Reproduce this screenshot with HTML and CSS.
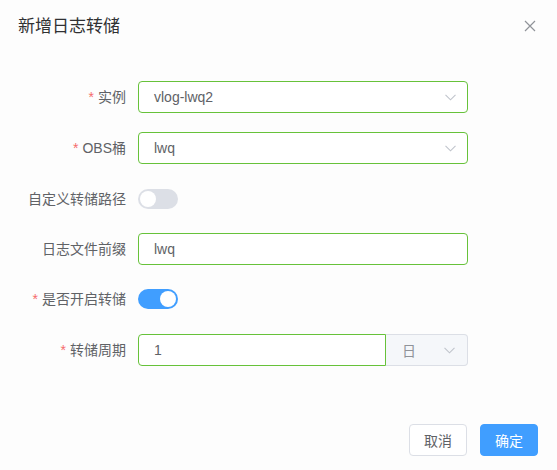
FILE: index.html
```html
<!DOCTYPE html>
<html lang="zh-CN">
<head>
<meta charset="utf-8">
<title>新增日志转储</title>
<link rel="stylesheet" href="styles.css">
</head>
<body>
<div class="dialog">
  <div class="header">
    <span class="title">新增日志转储</span>
    <svg class="close" width="12" height="12" viewBox="0 0 12 12"><path d="M1 1L11 11M11 1L1 11" stroke="#909399" stroke-width="1.2" fill="none"/></svg>
  </div>
  <form class="form">
    <div class="row r51">
      <label class="label"><span class="req">*</span>实例</label>
      <div class="input ok">
        <span class="val">vlog-lwq2</span>
        <svg class="chev" width="11" height="7" viewBox="0 0 11 7"><polyline points="0.5,0.8 5.5,5.8 10.5,0.8" stroke="#c0c4cc" stroke-width="1.1" fill="none"/></svg>
      </div>
    </div>
    <div class="row r51">
      <label class="label"><span class="req">*</span>OBS桶</label>
      <div class="input ok">
        <span class="val">lwq</span>
        <svg class="chev" width="11" height="7" viewBox="0 0 11 7"><polyline points="0.5,0.8 5.5,5.8 10.5,0.8" stroke="#c0c4cc" stroke-width="1.1" fill="none"/></svg>
      </div>
    </div>
    <div class="row r50">
      <label class="label">自定义转储路径</label>
      <div class="ctl"><span class="switch"><span class="knob"></span></span></div>
    </div>
    <div class="row r50">
      <label class="label">日志文件前缀</label>
      <div class="input ok"><span class="val">lwq</span></div>
    </div>
    <div class="row r51">
      <label class="label"><span class="req">*</span>是否开启转储</label>
      <div class="ctl"><span class="switch on"><span class="knob"></span></span></div>
    </div>
    <div class="row">
      <label class="label"><span class="req">*</span>转储周期</label>
      <div class="group">
        <div class="input ok grow"><span class="val">1</span></div>
        <div class="append">
          <span class="unit">日</span>
          <svg class="chev" width="11" height="7" viewBox="0 0 11 7"><polyline points="0.5,0.8 5.5,5.8 10.5,0.8" stroke="#c0c4cc" stroke-width="1.1" fill="none"/></svg>
        </div>
      </div>
    </div>
  </form>
  <div class="footer">
    <button type="button" class="btn">取消</button>
    <button type="button" class="btn primary">确定</button>
  </div>
</div>
</body>
</html>
```
FILE: styles.css
```css
html, body {
  margin: 0;
  padding: 0;
  background: #fdfdfd;
}
body {
  font-family: "Liberation Sans", Arial, "Noto Sans CJK SC", sans-serif;
  color: #606266;
}
.dialog {
  width: 557px;
  height: 470px;
  display: flex;
  flex-direction: column;
}
.header {
  display: flex;
  justify-content: space-between;
  align-items: center;
  padding: 15px 21px 0 18px;
  height: 24px;
}
.title {
  font-size: 17px;
  line-height: 24px;
  color: #303133;
}
.close {
  display: block;
  margin-top: -2px;
}
.form {
  margin: 42px 0 0 0;
  display: flex;
  flex-direction: column;
}
.row {
  display: flex;
  align-items: center;
  height: 32px;
}
.r51 { margin-bottom: 19px; }
.r50 { margin-bottom: 18px; }
.label {
  width: 126px;
  padding-right: 12px;
  text-align: right;
  font-size: 14px;
  line-height: 32px;
  color: #606266;
  white-space: nowrap;
}
.req {
  color: #f56c6c;
  margin-right: 4px;
}
.input {
  box-sizing: border-box;
  width: 330px;
  height: 32px;
  border: 1px solid #dcdfe6;
  border-radius: 4px;
  background: #fff;
  display: flex;
  align-items: center;
  justify-content: space-between;
  padding: 0 11px 0 15px;
  font-size: 14px;
  color: #606266;
}
.input.ok { border-color: #67c23a; }
.chev { display: block; }
.ctl {
  display: flex;
  align-items: center;
  height: 32px;
}
.switch {
  position: relative;
  display: block;
  width: 40px;
  height: 20px;
  border-radius: 10px;
  background: #dcdfe6;
}
.switch .knob {
  position: absolute;
  top: 2px;
  left: 2px;
  width: 16px;
  height: 16px;
  border-radius: 50%;
  background: #fff;
}
.switch.on { background: #409eff; }
.switch.on .knob { left: 22px; }
.group {
  display: flex;
  width: 330px;
  height: 32px;
}
.input.grow {
  width: 248px;
  border-top-right-radius: 0;
  border-bottom-right-radius: 0;
}
.append {
  box-sizing: border-box;
  width: 82px;
  height: 32px;
  background: #f5f7fa;
  border: 1px solid #dcdfe6;
  border-left: none;
  border-radius: 0 4px 4px 0;
  display: flex;
  align-items: center;
  justify-content: space-between;
  padding: 0 12px 0 16px;
  font-size: 14px;
  color: #909399;
}
.footer {
  display: flex;
  justify-content: flex-end;
  gap: 13px;
  margin-top: 58px;
  padding-right: 19px;
}
.btn {
  box-sizing: border-box;
  width: 58px;
  height: 32px;
  padding: 0;
  border: 1px solid #dcdfe6;
  border-radius: 4px;
  background: #fff;
  color: #606266;
  font-family: "Liberation Sans", Arial, "Noto Sans CJK SC", sans-serif;
  font-size: 14px;
}
.btn.primary {
  background: #409eff;
  border-color: #409eff;
  color: #fff;
}
```
